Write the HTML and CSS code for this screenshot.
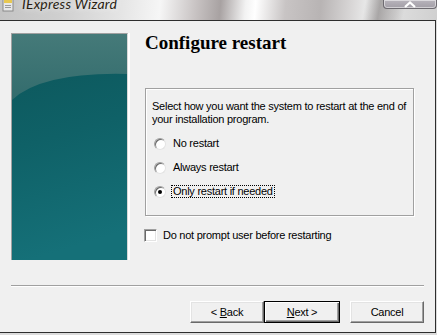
FILE: index.html
```html
<!DOCTYPE html>
<html>
<head>
<meta charset="utf-8">
<link rel="stylesheet" href="styles.css">
</head>
<body>
<div class="titlebar">
  <svg class="appicon" width="12" height="12" viewBox="0 0 12 12">
    <rect x="1" y="-2" width="10" height="13" fill="#e8e8e8" stroke="#8a8a8a"/>
    <rect x="2" y="0" width="8" height="3" fill="#e8c850"/>
    <rect x="3" y="5" width="6" height="1" fill="#9a9a9a"/>
    <rect x="3" y="7" width="6" height="1" fill="#9a9a9a"/>
  </svg>
  <span class="apptitle">IExpress Wizard</span>
  <div class="capbtn">
    <svg width="14" height="7" viewBox="0 0 14 7"><path d="M2 6 L7 1.5 L12 6" fill="none" stroke="#fff" stroke-width="2.2"/></svg>
  </div>
</div>
<div class="window">
  <div class="content">
    <div class="banner">
      <svg width="115" height="226" viewBox="0 0 115 226" preserveAspectRatio="none">
        <defs>
          <linearGradient id="lo" x1="0" y1="0" x2="0.15" y2="1">
            <stop offset="0" stop-color="#0c5559"/>
            <stop offset="0.5" stop-color="#0f6167"/>
            <stop offset="1" stop-color="#157078"/>
          </linearGradient>
          <linearGradient id="hi" x1="0" y1="0" x2="0" y2="1">
            <stop offset="0" stop-color="#457a79"/>
            <stop offset="1" stop-color="#336c6d"/>
          </linearGradient>
        </defs>
        <rect width="115" height="226" fill="url(#lo)"/>
        <path d="M0 0 H115 V40 Q30 38 0 66 Z" fill="url(#hi)"/>
      </svg>
    </div>
    <div class="main">
      <h1 class="heading">Configure restart</h1>
      <div class="group">
        <p class="prompt">Select how you want the system to restart at the end of your installation program.</p>
        <div class="radio"><span class="rbtn"></span><span class="label">No restart</span></div>
        <div class="radio"><span class="rbtn"></span><span class="label">Always restart</span></div>
        <div class="radio"><span class="rbtn on"></span><span class="label focus">Only restart if needed</span></div>
      </div>
      <div class="check"><span class="cbox"></span><span class="label">Do not prompt user before restarting</span></div>
    </div>
  </div>
  <div class="sep"></div>
  <div class="buttons">
    <button class="btn">&lt; <u>B</u>ack</button>
    <button class="btn default"><u>N</u>ext &gt;</button>
    <button class="btn cancel">Cancel</button>
  </div>
</div>
</body>
</html>
```
FILE: styles.css
```css
html, body {
  margin: 0;
  padding: 0;
}
body {
  width: 437px;
  height: 335px;
  overflow: hidden;
  background: #dcdcdc;
  font-family: "Liberation Sans", Arial, sans-serif;
  font-size: 11px;
  letter-spacing: -0.25px;
  color: #000;
}
.titlebar {
  height: 20px;
  display: flex;
  align-items: flex-start;
  background:
    linear-gradient(100deg, rgba(255,255,255,0) 0px, rgba(255,255,255,0) 360px, rgba(120,115,115,0.55) 375px, rgba(120,115,115,0.2) 392px, rgba(255,255,255,0) 400px),
    linear-gradient(95deg, #c4c4c4 0px, #cfcfcf 60px, #e4e4e4 120px, #f6f6f6 160px, #c9c4c4 195px, #a8a2a2 220px, #f2f2f2 245px, #ffffff 255px, #c8c4c4 285px, #b8b4b4 320px, #d8d6d6 350px, #e8e8e8 365px, #d0d0d0 437px);
  overflow: hidden;
}
.appicon {
  margin: 0 0 0 2px;
  flex: none;
}
.apptitle {
  margin: -4px 0 0 8px;
  font-family: Lato, "DejaVu Sans", sans-serif;
  font-style: italic;
  font-size: 14px;
  line-height: 16px;
  color: #2a1e12;
  text-shadow: 0 0 6px rgba(255,255,255,0.9);
  letter-spacing: 0.2px;
}
.capbtn {
  margin-left: auto;
  width: 52px;
  height: 8px;
  border: 1px solid #6d6a70;
  border-top: none;
  border-radius: 0 0 4px 4px;
  background: linear-gradient(#b8b4bc, #a29ea6);
  display: flex;
  justify-content: center;
  align-items: flex-end;
  box-shadow: inset 0 0 0 1px rgba(255,255,255,0.5);
}
.capbtn svg { display: block; }
.window {
  width: 435px;
  height: 311px;
  background: #f0f0f0;
  border-top: 1px solid #2e2e2e;
  border-right: 1px solid #2e2e2e;
  border-bottom: 1px solid #2e2e2e;
  display: flex;
  flex-direction: column;
}
.content {
  display: flex;
  height: 264px;
  padding: 12px 0 0 11px;
  box-sizing: border-box;
}
.banner {
  flex: none;
  width: 115px;
  height: 226px;
  border-top: 1px solid #a0a0a0;
  border-left: 1px solid #a0a0a0;
  border-right: 1px solid #d8d8d8;
  box-shadow: 2px 0 0 #fff;
}
.banner svg { display: block; }
.main {
  margin-left: 17px;
  width: 269px;
  display: flex;
  flex-direction: column;
}
.heading {
  margin: -1px 0 0 0;
  font-family: "Liberation Serif", "Times New Roman", serif;
  font-weight: bold;
  font-size: 19px;
  line-height: 22px;
  height: 22px;
  letter-spacing: 0;
}
.group {
  margin-top: 34px;
  height: 128px;
  border: 1px solid #a0a0a0;
  box-shadow: 1px 1px 0 #fff, inset 1px 1px 0 #fff;
  padding: 11px 0 0 6px;
  box-sizing: border-box;
  display: flex;
  flex-direction: column;
}
.prompt {
  margin: 0 0 11px 0;
  line-height: 13px;
  width: 262px;
}
.radio, .check {
  display: flex;
  align-items: center;
  height: 13px;
  margin-top: 11px;
}
.radio:first-of-type { margin-top: 0; }
.rbtn {
  flex: none;
  width: 12px;
  height: 12px;
  margin-left: 2px;
  box-sizing: border-box;
  border-radius: 50%;
  background: #fff;
  border: 1px solid;
  border-color: #a0a0a0 #e3e3e3 #e3e3e3 #a0a0a0;
  box-shadow: inset 1px 1px 0 #696969;
  position: relative;
}
.rbtn.on::after {
  content: "";
  position: absolute;
  left: 3px;
  top: 3px;
  width: 4px;
  height: 4px;
  border-radius: 50%;
  background: #000;
}
.label {
  margin-left: 5px;
  white-space: nowrap;
  padding: 0 1px;
  line-height: 11px;
  border: 1px solid transparent;
}
.label.focus {
  border: 1px dotted #000;
}
.check {
  margin-top: 13px;
  margin-left: -1px;
}
.cbox {
  flex: none;
  width: 13px;
  height: 13px;
  box-sizing: border-box;
  background: #fff;
  border: 1px solid;
  border-color: #a0a0a0 #fff #fff #a0a0a0;
  box-shadow: inset 1px 1px 0 #696969, inset -1px -1px 0 #e3e3e3;
}
.check .label { margin-left: 4px; }
.sep {
  margin: 0 11px;
  height: 1px;
  background: #a0a0a0;
  border-bottom: 1px solid #fff;
}
.buttons {
  display: flex;
  justify-content: flex-end;
  padding: 14px 11px 0 0;
}
.btn {
  font-family: "Liberation Sans", Arial, sans-serif;
  font-size: 11px;
  letter-spacing: -0.25px;
  width: 74px;
  height: 22px;
  padding: 0;
  margin: 0;
  background: #f0f0f0;
  color: #000;
  border: 1px solid;
  border-color: #fff #696969 #696969 #fff;
  box-shadow: inset -1px -1px 0 #a0a0a0, inset 1px 1px 0 #e3e3e3;
  box-sizing: border-box;
}
.btn.default {
  border: 1px solid #000;
  box-shadow: inset 1px 1px 0 #fff, inset -1px -1px 0 #696969, inset -2px -2px 0 #a0a0a0;
  width: 76px;
}
.btn.cancel { margin-left: 10px; width: 74px; }
.btn u { text-decoration: underline; }
```
